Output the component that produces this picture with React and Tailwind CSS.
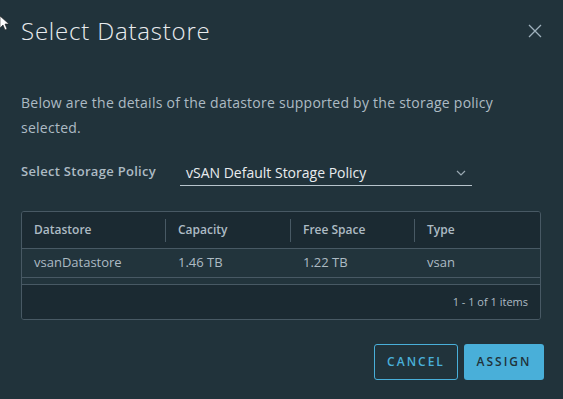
import React from "react";

export default function App() {
  const font = { fontFamily: '"Open Sans", "Liberation Sans", sans-serif' };
  return (
    <div className="w-[563px] h-[399px] bg-[#21333b] relative overflow-hidden" style={font}>
      <svg className="absolute left-0 top-[16px]" width="10" height="16" viewBox="0 0 10 16">
        <path d="M0 0 L0 12 L3 9 L5 14 L7 13 L5 8 L9 8 Z" fill="#ffffff" stroke="#222" strokeWidth="0.6" />
      </svg>
      <div className="flex items-center justify-between pl-[21px] pr-[20px] pt-[15px]">
        <h1 className="text-[24px] leading-[32px] font-light tracking-[0.8px] text-[#e9ecef]">Select Datastore</h1>
        <svg width="14" height="14" viewBox="0 0 14 14" className="mr-[1px]">
          <path d="M1 1 L13 13 M13 1 L1 13" stroke="#9fb1bc" strokeWidth="1.3" />
        </svg>
      </div>
      <p className="mt-[43px] px-[21px] text-[14px] leading-[25px] tracking-[0.25px] text-[#adbbc4] w-[530px]">
        Below are the details of the datastore supported by the storage policy selected.
      </p>
      <div className="flex items-start mt-[20px] pl-[21px]">
        <div className="w-[159px] text-[13px] font-semibold tracking-[0.3px] text-[#adbbc4] pt-[2px]">Select Storage Policy</div>
        <div className="w-[292px] border-b border-[#b7c4cc] flex items-center justify-between pl-[6px] pr-[6px] h-[26px]">
          <span className="text-[14px] text-[#e9ecef]">vSAN Default Storage Policy</span>
          <svg width="10" height="6" viewBox="0 0 10 6">
            <path d="M1 1 L5 5 L9 1" stroke="#9aa9b2" strokeWidth="1.2" fill="none" />
          </svg>
        </div>
      </div>
      <div className="mx-[21px] mt-[25px] w-[520px] border border-[#485964] rounded-[3px] overflow-hidden">
        <div className="grid grid-cols-[144px_125px_124px_1fr] h-[37px] bg-[#1b2a32] items-center border-b border-[#485964] text-[12px] font-semibold text-[#adbbc4]">
          <div className="pl-[12px] border-r border-[#485964] h-[23px] flex items-center">Datastore</div>
          <div className="pl-[12px] border-r border-[#485964] h-[23px] flex items-center">Capacity</div>
          <div className="pl-[12px] border-r border-[#485964] h-[23px] flex items-center">Free Space</div>
          <div className="pl-[12px] h-[23px] flex items-center">Type</div>
        </div>
        <div className="grid grid-cols-[144px_125px_124px_1fr] h-[29px] bg-[#22343c] items-center border-b border-[#485964] text-[13px] text-[#adbbc4]">
          <div className="pl-[12px]">vsanDatastore</div>
          <div className="pl-[12px]">1.46 TB</div>
          <div className="pl-[12px]">1.22 TB</div>
          <div className="pl-[12px]">vsan</div>
        </div>
        <div className="h-[7px] bg-[#22343c] border-b border-[#485964]"></div>
        <div className="h-[34px] bg-[#1b2a32] flex items-center justify-end pr-[12px] text-[11px] text-[#adbbc4]">
          1 - 1 of 1 items
        </div>
      </div>
      <div className="flex justify-end gap-[6px] mt-[24px] pr-[19px]">
        <button className="w-[84px] h-[36px] border border-[#49afd9] rounded-[3px] text-[#49afd9] text-[12px] font-semibold tracking-[2px]">CANCEL</button>
        <button className="w-[80px] h-[36px] bg-[#49afd9] rounded-[3px] text-[#21333b] text-[12px] font-semibold tracking-[2px]">ASSIGN</button>
      </div>
    </div>
  );
}
